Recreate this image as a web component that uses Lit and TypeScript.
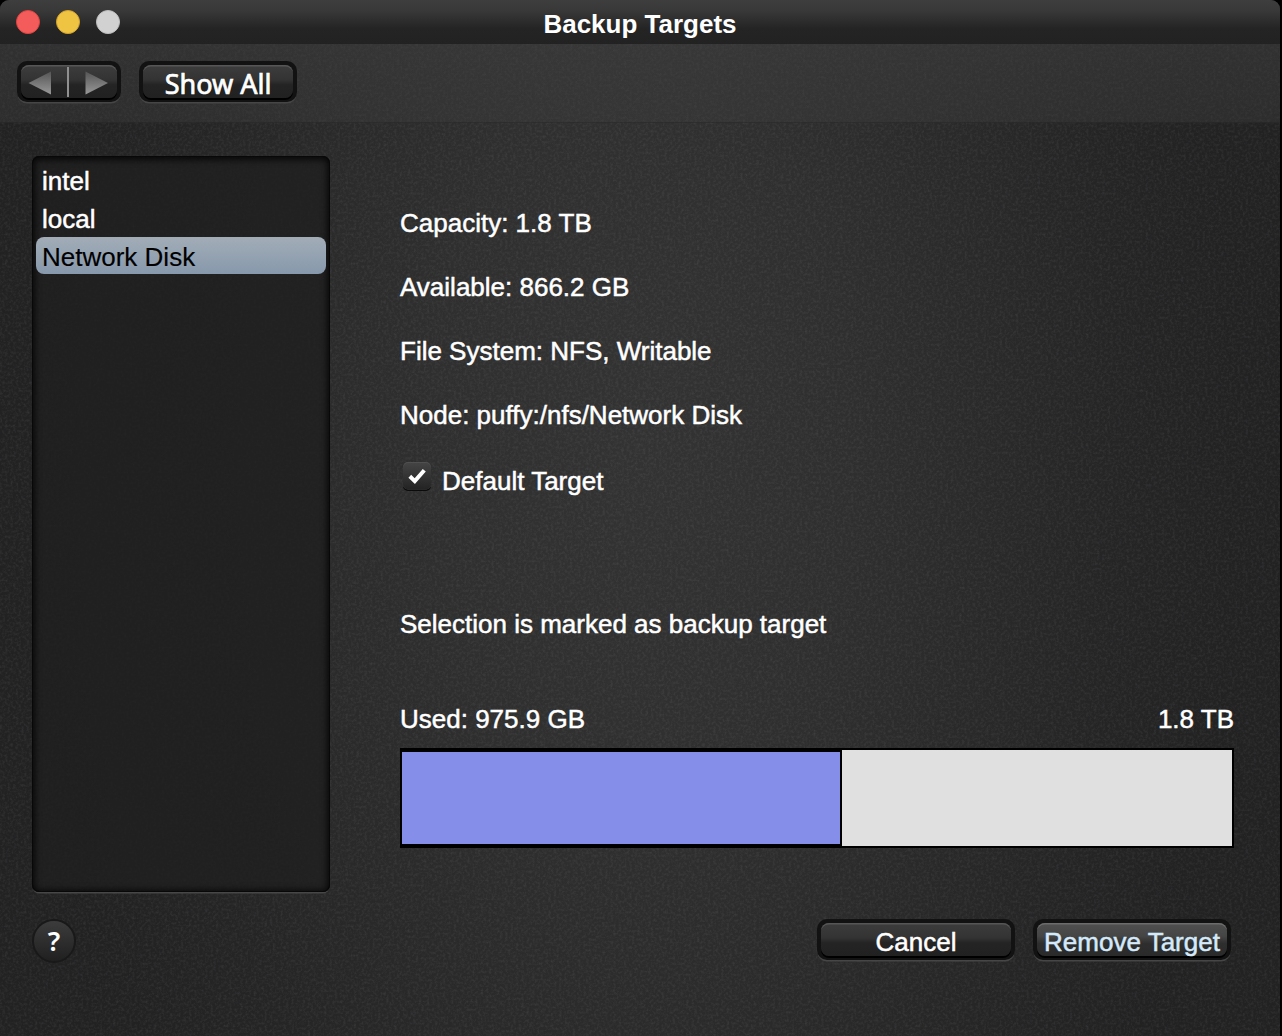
import { LitElement, html, css } from "lit";
import { customElement, state } from "lit/decorators.js";

@customElement("app-root")
class AppRoot extends LitElement {
  static styles = css`
    :host { display: block; width: 1282px; height: 1036px; background: #000; overflow: hidden;
      font-family: "Liberation Sans", Arial, sans-serif; font-size: 26px; color: #fff; }
    * { box-sizing: border-box; }
    .window { position: relative; width: 1280px; height: 1036px; border-radius: 9px 9px 0 0; overflow: hidden;
      display: flex; flex-direction: column;
      background:
        radial-gradient(ellipse 600px 1100px at 640px 440px, #333 0%, #2f2f2f 35%, #252526 80%, #222223 100%); }
    .grain { position: absolute; inset: 44px 0 0 0; width: 1280px; height: 992px; pointer-events: none; }
    .titlebar { position: relative; flex: none; height: 44px; padding: 8px 16px 0; display: grid;
      grid-template-columns: 120px 1fr 120px;
      background: linear-gradient(#3e3e3e, #383838 25%, #242424 65%, #222); }
    .lights { display: flex; gap: 16px; padding-top: 2px; }
    .light { width: 24px; height: 24px; border-radius: 50%; }
    .red { background: #f45c5b; border: 1px solid #e0443f; }
    .yellow { background: #f0c443; border: 1px solid #d6a32c; }
    .gray { background: #d1d1d1; border: 1px solid #bdbdbd; }
    .title { font-weight: bold; text-align: center; line-height: 32px; white-space: nowrap; }
    .toolbar { position: relative; flex: none; height: 79px; padding: 17px 17px 0; display: flex; gap: 18px;
      background: linear-gradient(rgba(64,64,64,.5), rgba(60,60,60,.42));
      border-bottom: 1px solid rgba(0,0,0,.2); }
    .well { position: relative; flex: none; height: 41px; padding: 4px 4px 2px; border-radius: 10px; background: #121212;
      box-shadow: 0 2px 0 -0.5px #464646; }
    .face { display: flex; justify-content: center; height: 33px; border-radius: 8px;
      background: linear-gradient(#3d3d3d, #333 45%, #242424 60%, #212121);
      box-shadow: inset 0 2px 0 -0.5px #565656, 0 2px 0 #000; }
    .bright .face { background: linear-gradient(#505050, #454545 40%, #2e2e2e 62%, #2a2a2a);
      box-shadow: inset 0 2px 0 -0.5px #6c6c6c, 0 2px 0 #000; }
    .nav { width: 104px; }
    .showall { width: 158px; }
    .action { width: 198px; }
    .label { -webkit-text-stroke: .5px currentColor; line-height: 38px; white-space: nowrap; }
    .lucida { font-family: "Noto Sans", sans-serif; line-height: 37px; font-size: 27px; -webkit-text-stroke: .7px currentColor; }
    .bright .label { color: #d4e9fa; -webkit-text-stroke-color: #d4e9fa; }
    .content { position: relative; display: flex; padding: 33px 46px 0 32px; height: 770px; }
    .list { flex: none; width: 298px; height: 736px; padding: 5px 4px; border-radius: 7px;
      background: rgba(31,31,31,.8);
      box-shadow: inset 0 0 0 1px #080808, inset 0 1px 6px 3px rgba(0,0,0,.75), 0 2px 0 -0.5px #474747; }
    .row { height: 37px; margin-bottom: 1px; padding-left: 6px; line-height: 40px; border-radius: 8px;
      -webkit-text-stroke: .5px currentColor; }
    .selected { color: #000; -webkit-text-stroke: .15px #000; background: linear-gradient(#a2acb7, #8799ac); }
    .detail { flex: none; width: 834px; margin-left: 70px; padding-top: 48px; display: flex; flex-direction: column; }
    .line { height: 64px; line-height: 38px; white-space: nowrap; -webkit-text-stroke: .5px currentColor; }
    .check { display: flex; gap: 10px; height: 145px; padding-left: 3px; }
    .box { width: 29px; height: 29px; margin-top: 2px; }
    .check .line { padding-top: 2px; }
    .status { height: 95px; }
    .usage { display: flex; justify-content: space-between; height: 48px; }
    .bar { height: 100px; border: 2px solid #000; background: #e0e0e0; display: flex; }
    .used { border: solid #000; border-width: 2px 2px 2px 0; background: #858ee8; }
    .footer { position: relative; display: flex; align-items: flex-start; gap: 18px; padding: 26px 49px 0 32px; }
    .help { width: 44px; height: 44px; border-radius: 50%; margin-right: auto; text-align: center;
      background: linear-gradient(#3c3c3c, #202020); border: 2px solid #191919; }
    .help .label { line-height: 39px; font-weight: 600; font-size: 27px; -webkit-text-stroke: 0; display: block; }
  `;

  @state() private selected = "Network Disk";
  private targets = ["intel", "local", "Network Disk"];
  private facts = ["Capacity: 1.8 TB", "Available: 866.2 GB", "File System: NFS, Writable", "Node: puffy:/nfs/Network Disk"];
  private usedShare = 440 / 830;

  render() {
    return html`
      <div class="window">
        <svg class="grain" viewBox="0 0 1280 992">
          <filter id="grain" x="0" y="0" width="100%" height="100%" color-interpolation-filters="sRGB">
            <feTurbulence type="fractalNoise" baseFrequency="0.37" numOctaves="3" seed="4"></feTurbulence>
            <feColorMatrix values="0 0 0 0 .75  0 0 0 0 .75  0 0 0 0 .78  .2 0 0 0 -.083"></feColorMatrix>
          </filter>
          <rect width="1280" height="992" filter="url(#grain)"></rect>
        </svg>
        <div class="titlebar">
          <div class="lights">
            <span class="light red"></span><span class="light yellow"></span><span class="light gray"></span>
          </div>
          <div class="title">Backup Targets</div>
        </div>
        <div class="toolbar">
          <div class="well nav"><div class="face">
            <svg width="96" height="33" viewBox="0 0 96 33">
              <defs><linearGradient id="tri" x1="0" y1="0" x2="0" y2="1">
                <stop offset="0" stop-color="#555"></stop><stop offset="1" stop-color="#999"></stop>
              </linearGradient></defs>
              <path d="M7.5 18 30 6.500V29.500Z" fill="url(#tri)"></path>
              <rect x="46" y="2" width="2" height="30" fill="#909090"></rect>
              <path d="M87 18 64.500 6.500V29.500Z" fill="url(#tri)"></path>
            </svg>
          </div></div>
          <div class="well showall"><div class="face"><span class="label lucida">Show All</span></div></div>
        </div>
        <div class="content">
          <div class="list">
            ${this.targets.map((t) => html`<div class="row ${t === this.selected ? "selected" : ""}"
              @click=${() => (this.selected = t)}>${t}</div>`)}
          </div>
          <div class="detail">
            ${this.facts.map((f) => html`<div class="line">${f}</div>`)}
            <div class="check">
              <svg class="box" viewBox="0 0 29 29">
                <defs><linearGradient id="box" x1="0" y1="0" x2="0" y2="1">
                  <stop offset="0" stop-color="#444"></stop><stop offset="1" stop-color="#232323"></stop>
                </linearGradient></defs>
                <rect x="0" y="1" width="28" height="28" rx="5" fill="#0b0b0b"></rect>
                <rect x="0" y="0" width="28" height="27.500" rx="5" fill="#505050"></rect>
                <rect x="0" y="1" width="28" height="26.500" rx="5" fill="url(#box)"></rect>
                <path d="M6.800 14.300 11.800 19.100 21.300 8.300" fill="none" stroke="#fff" stroke-width="4"></path>
              </svg>
              <div class="line">Default Target</div>
            </div>
            <div class="line status">Selection is marked as backup target</div>
            <div class="usage"><div class="line">Used: 975.9 GB</div><div class="line">1.8 TB</div></div>
            <div class="bar"><div class="used" style="width:${this.usedShare * 100}%"></div></div>
          </div>
        </div>
        <div class="footer">
          <div class="help"><span class="label lucida">?</span></div>
          <div class="well action"><div class="face"><span class="label">Cancel</span></div></div>
          <div class="well action bright"><div class="face"><span class="label">Remove Target</span></div></div>
        </div>
      </div>`;
  }
}
